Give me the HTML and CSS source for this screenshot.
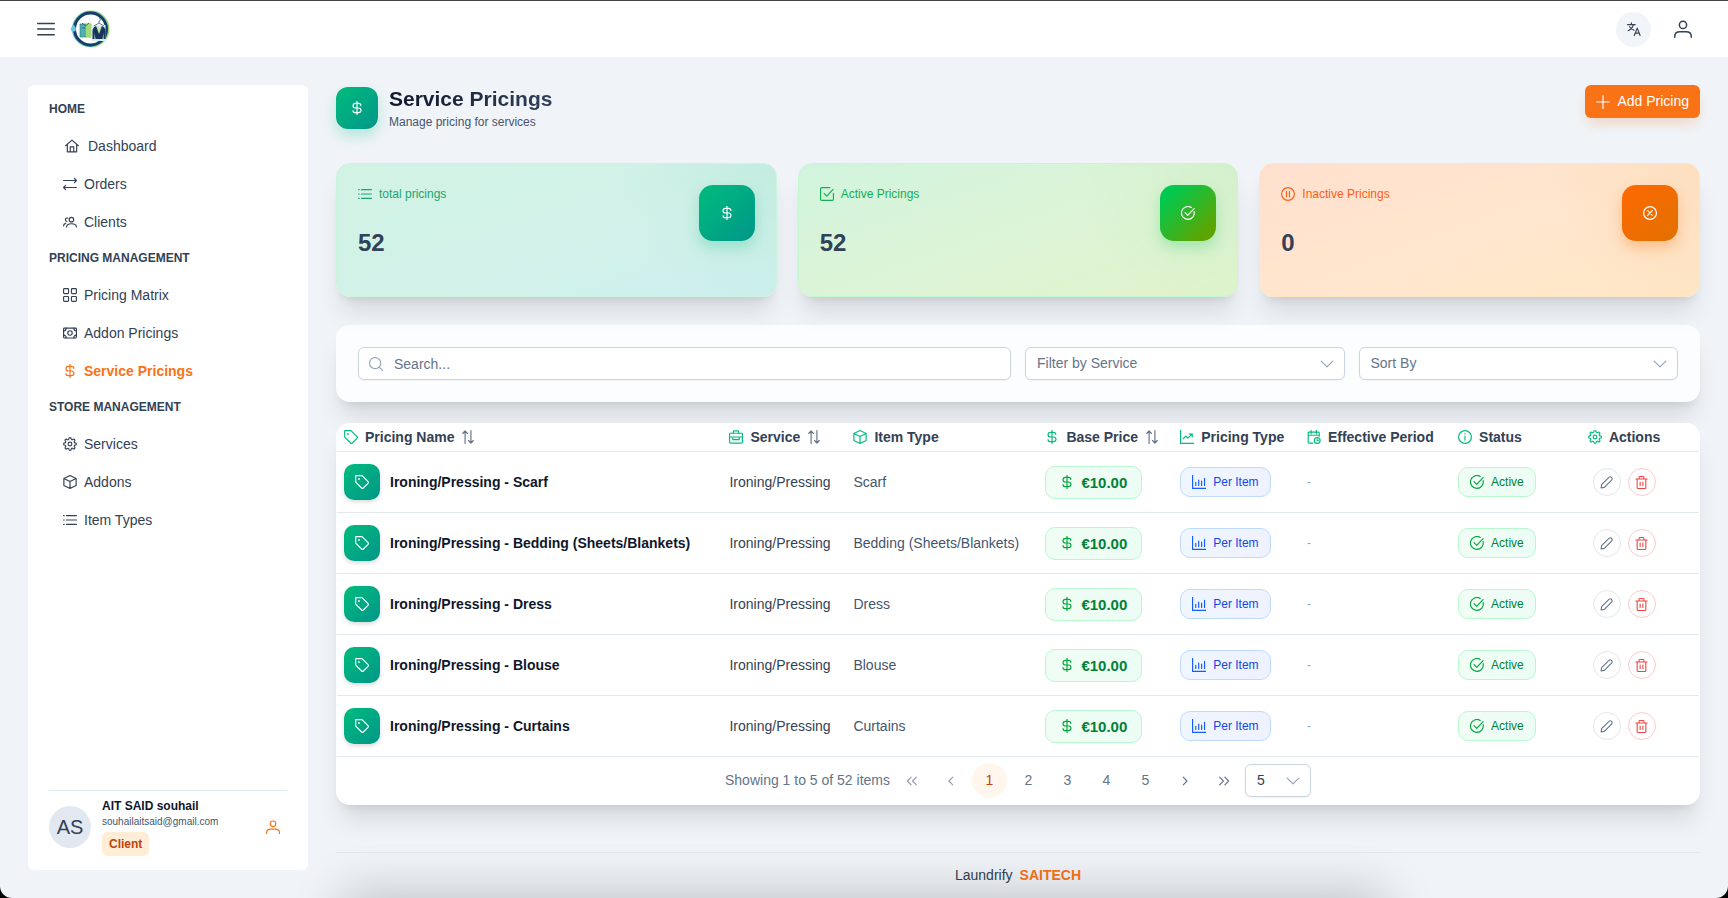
FILE: index.html
```html
<!DOCTYPE html>
<html lang="en">
<head>
    <meta charset="UTF-8">
    <meta name="viewport" content="width=device-width, initial-scale=1.0">
    <title>Laundrify - Service Pricings</title>
    <link rel="stylesheet" href="styles.css">
</head>
<body>
    <svg class="sprite" aria-hidden="true">
        <symbol id="i-bars" viewBox="0 0 24 24"><path d="M1 4.500h22M1 12h22M1 19.500h22"/></symbol>
        <symbol id="i-home" viewBox="0 0 24 24"><path d="M1 11.500 12 2l11 9.500M4 9.500V22h16V9.500M9 22v-8.500h6V22"/></symbol>
        <symbol id="i-swap" viewBox="0 0 24 24"><path d="M1 6h22M19.500 2.500 23 6l-3.500 3.500M23 18H1M4.500 14.500 1 18l3.500 3.500"/></symbol>
        <symbol id="i-users" viewBox="0 0 24 24"><circle cx="14.500" cy="8" r="3.800"/><path d="M6 20.500c0-3.500 3-5.500 8.500-5.500s8.500 2 8.500 5.500M8.500 5.500C6 4.500 4 6 4.200 8.200c.1 1.500 1 2.500 2.500 2.900M1 18.500c0-2 1.200-3.600 3.600-4.200"/></symbol>
        <symbol id="i-grid" viewBox="0 0 24 24"><rect x="1" y="1" width="8.500" height="8.500" rx="1.500"/><rect x="14.500" y="1" width="8.500" height="8.500" rx="1.500"/><rect x="1" y="14.500" width="8.500" height="8.500" rx="1.500"/><rect x="14.500" y="14.500" width="8.500" height="8.500" rx="1.500"/></symbol>
        <symbol id="i-bill" viewBox="0 0 24 24"><rect x="1" y="3.500" width="22" height="17" rx="1.500"/><circle cx="12" cy="12" r="3.800"/><path d="M1 8.500c3 0 4.500-1.500 4.500-5M23 8.500c-3 0-4.500-1.500-4.500-5M1 15.500c3 0 4.500 1.500 4.500 5M23 15.500c-3 0-4.500 1.500-4.500 5"/></symbol>
        <symbol id="i-dollar" viewBox="0 0 24 24"><path d="M12 .5v23M18.500 7.500c0-2.200-1.800-3.500-4-3.500H9.500C7 4 5.200 5.600 5.200 8s1.800 4 4.300 4h5c2.500 0 4.300 1.600 4.300 4s-1.800 4-4.300 4h-5c-2.500 0-4.300-1.300-4.300-3.500"/></symbol>
        <symbol id="i-cog" viewBox="0 0 24 24"><circle cx="12" cy="12" r="3.200"/><path d="M19.400 15a1.650 1.650 0 0 0 .33 1.820l.06.06a2 2 0 0 1 0 2.830 2 2 0 0 1-2.830 0l-.06-.06a1.650 1.650 0 0 0-1.820-.33 1.650 1.650 0 0 0-1 1.510V21a2 2 0 0 1-2 2 2 2 0 0 1-2-2v-.09A1.650 1.650 0 0 0 9 19.400a1.650 1.650 0 0 0-1.820.33l-.06.06a2 2 0 0 1-2.830 0 2 2 0 0 1 0-2.830l.06-.06a1.650 1.650 0 0 0 .33-1.820 1.650 1.650 0 0 0-1.510-1H3a2 2 0 0 1-2-2 2 2 0 0 1 2-2h.09A1.650 1.650 0 0 0 4.600 9a1.650 1.650 0 0 0-.33-1.820l-.06-.06a2 2 0 0 1 0-2.830 2 2 0 0 1 2.830 0l.06.06a1.650 1.650 0 0 0 1.820.33H9a1.650 1.650 0 0 0 1-1.510V3a2 2 0 0 1 2-2 2 2 0 0 1 2 2v.09a1.650 1.650 0 0 0 1 1.510 1.650 1.650 0 0 0 1.820-.33l.06-.06a2 2 0 0 1 2.830 0 2 2 0 0 1 0 2.830l-.06.06a1.650 1.650 0 0 0-.33 1.820V9a1.650 1.650 0 0 0 1.510 1H21a2 2 0 0 1 2 2 2 2 0 0 1-2 2h-.09a1.650 1.650 0 0 0-1.510 1z"/></symbol>
        <symbol id="i-box" viewBox="0 0 24 24"><path d="M12 1 22.500 6v12L12 23 1.500 18V6zM1.500 6 12 11l10.500-5M12 11v12"/></symbol>
        <symbol id="i-list" viewBox="0 0 24 24"><path d="M6 4.500h17M6 12h17M6 19.500h17M1 4.500h1M1 12h1M1 19.500h1"/></symbol>
        <symbol id="i-user" viewBox="0 0 24 24"><circle cx="12" cy="6.500" r="4.800"/><path d="M1 23v-1.500c0-4 3-6 7-6h8c4 0 7 2 7 6V23"/></symbol>
        <symbol id="i-language" viewBox="0 0 24 24"><path d="M1 4.500h13M7.500 1.500v3M11 4.500C10 9 7 12.500 2 15M4.500 8c1.500 3 4 5 7.500 6M12.500 23l5-12.500 5 12.500M14.200 19h6.600"/></symbol>
        <symbol id="i-plus" viewBox="0 0 24 24"><path d="M12 1v22M1 12h22"/></symbol>
        <symbol id="i-check-square" viewBox="0 0 24 24"><path d="M17 1H3a2 2 0 0 0-2 2v18a2 2 0 0 0 2 2h18a2 2 0 0 0 2-2V11M7 11l4.500 4.500L22.500 4"/></symbol>
        <symbol id="i-check-circle" viewBox="0 0 24 24"><path d="M22.500 9.500A11 11 0 1 1 17.500 2.500M7 11.500l4.500 4.500L22.500 4.500"/></symbol>
        <symbol id="i-pause" viewBox="0 0 24 24"><circle cx="12" cy="12" r="11"/><path d="M9.500 7.500v9M14.500 7.500v9"/></symbol>
        <symbol id="i-times-circle" viewBox="0 0 24 24"><circle cx="12" cy="12" r="11"/><path d="m8 8 8 8M16 8l-8 8"/></symbol>
        <symbol id="i-search" viewBox="0 0 24 24"><circle cx="10.500" cy="10.500" r="9.500"/><path d="m17.500 17.500 6 6"/></symbol>
        <symbol id="i-chevron" viewBox="0 0 24 24"><path d="m2 7 10 10L22 7"/></symbol>
        <symbol id="i-tag" viewBox="0 0 24 24"><path d="M1.200 1.200h10.900L22.300 11.400a2 2 0 0 1 0 2.800l-8.100 8.100a2 2 0 0 1-2.800 0L1.200 12.100z"/><circle cx="6.800" cy="6.800" r=".6"/></symbol>
        <symbol id="i-briefcase" viewBox="0 0 24 24"><rect x="1" y="5.500" width="22" height="17" rx="1.500"/><path d="M7.500 5.500V3A1.500 1.500 0 0 1 9 1.500h6A1.500 1.500 0 0 1 16.500 3v2.500M1 12h22M6.500 12v4.500h11V12"/></symbol>
        <symbol id="i-sort" viewBox="0 0 24 24"><path d="M7 23V2M3 6l4-4.500L11 6M17 1v21M13 18l4 4.500L21 18"/></symbol>
        <symbol id="i-chart-line" viewBox="0 0 24 24"><path d="M1 .5V23h23M5.500 15l4.500-4.500 3.500 3.500L21 7M16 7h5v5"/></symbol>
        <symbol id="i-chart-bar" viewBox="0 0 24 24"><path d="M1 .5V23h23M6.500 12.500V18M11.500 8.500V18M16.500 10.500V18M21.500 5.500V18"/></symbol>
        <symbol id="i-calendar" viewBox="0 0 24 24"><path d="M10 22.500H3.500A1.500 1.500 0 0 1 2 21V5a1.500 1.500 0 0 1 1.500-1.500h16A1.500 1.500 0 0 1 21 5v5.500M2 9h19M7 .5v6M16 .5v6"/><circle cx="17.500" cy="18" r="5"/><path d="M17.500 15.500V18h2"/></symbol>
        <symbol id="i-info" viewBox="0 0 24 24"><circle cx="12" cy="12" r="11"/><path d="M12 10.500v7M12 6v.8"/></symbol>
        <symbol id="i-pencil" viewBox="0 0 24 24"><path d="M2 22l1-6L17 2.200a2.500 2.500 0 0 1 3.600 0l1.200 1.200a2.500 2.500 0 0 1 0 3.600L8 21z"/></symbol>
        <symbol id="i-trash" viewBox="0 0 24 24"><path d="M1.500 5.500h21M4 5.500V21A2 2 0 0 0 6 23h12a2 2 0 0 0 2-2V5.500M7.500 5.500V2.500A1.500 1.500 0 0 1 9 1h6a1.500 1.500 0 0 1 1.500 1.500v3M9.500 11v6.500M14.500 11v6.500"/></symbol>
        <symbol id="i-left" viewBox="0 0 24 24"><path d="M15 5.500 8.500 12l6.500 6.500"/></symbol>
        <symbol id="i-right" viewBox="0 0 24 24"><path d="m9 5.500 6.500 6.500L9 18.500"/></symbol>
        <symbol id="i-first" viewBox="0 0 24 24"><path d="M10.500 5.500 4 12l6.500 6.500M19.500 5.500 13 12l6.500 6.500"/></symbol>
        <symbol id="i-last" viewBox="0 0 24 24"><path d="m4.500 5.500 6.500 6.500-6.500 6.500M13.500 5.500 20 12l-6.500 6.500"/></symbol>
    </svg>

    <header class="topbar">
        <button class="icon-button" type="button" aria-label="Toggle menu"><svg class="icon icon-lg"><use href="#i-bars"/></svg></button>
        <a class="logo" href="#" aria-label="Laundrify">
            <svg viewBox="0 0 40 40" width="40" height="40">
                <circle cx="21" cy="20" r="17.500" fill="none" stroke="#9bd977" stroke-width="2"/>
                <circle cx="20" cy="20" r="17.500" fill="none" stroke="#4fb3c4" stroke-width="1"/>
                <circle cx="20.500" cy="20" r="16" fill="#fff" stroke="#153f6b" stroke-width="3"/>
                <path d="M3.500 15.500c2 2.500 2.500 3.500 2.500 4.500a2.600 2.600 0 0 1-5.200 0c0-1 .8-2.500 2.700-4.500z" fill="#6cc5df"/>
                <path d="M10 15h11v13H10z" fill="#4fb0b4" stroke="#2a6f80" stroke-width=".6"/>
                <path d="M16 15h5v13h-5z" fill="#a5d977"/>
                <path d="m12 14 3.500 3 3.500-3M12 19h3" fill="none" stroke="#2a6f80" stroke-width="1"/>
                <path d="M21.500 16h14v16h-14z" fill="#d5f0f5"/>
                <path d="M22.500 30v-8c0-3 2-4 3.500-5l3 3 3-3c1.500 1 3.500 2 3.500 5v8h-2v-6l-1 6h-7l-1-6v6z" fill="#18335c"/>
                <path d="m26 17 3 8 3-8-3 2z" fill="#c3e8a0"/>
                <path d="m24 17 5-3 5 3M29 14v-2c2 0 2-2.500 0-2.500" fill="none" stroke="#47728c" stroke-width=".9"/>
            </svg>
        </a>
        <div class="topbar-actions">
            <button class="icon-button language" type="button" aria-label="Language"><svg class="icon"><use href="#i-language"/></svg></button>
            <button class="icon-button" type="button" aria-label="Profile"><svg class="icon icon-lg"><use href="#i-user"/></svg></button>
        </div>
    </header>

    <div class="layout">
        <aside class="sidebar">
            <nav>
                <h2 class="menu-title">Home</h2>
                <ul class="menu">
                    <li><a class="menu-link home-link" href="#"><svg class="icon"><use href="#i-home"/></svg>Dashboard</a></li>
                    <li><a class="menu-link" href="#"><svg class="icon"><use href="#i-swap"/></svg>Orders</a></li>
                    <li><a class="menu-link" href="#"><svg class="icon"><use href="#i-users"/></svg>Clients</a></li>
                </ul>
                <h2 class="menu-title">Pricing Management</h2>
                <ul class="menu">
                    <li><a class="menu-link" href="#"><svg class="icon"><use href="#i-grid"/></svg>Pricing Matrix</a></li>
                    <li><a class="menu-link" href="#"><svg class="icon"><use href="#i-bill"/></svg>Addon Pricings</a></li>
                    <li><a class="menu-link active" href="#"><svg class="icon"><use href="#i-dollar"/></svg>Service Pricings</a></li>
                </ul>
                <h2 class="menu-title">Store Management</h2>
                <ul class="menu">
                    <li><a class="menu-link" href="#"><svg class="icon"><use href="#i-cog"/></svg>Services</a></li>
                    <li><a class="menu-link" href="#"><svg class="icon"><use href="#i-box"/></svg>Addons</a></li>
                    <li><a class="menu-link" href="#"><svg class="icon"><use href="#i-list"/></svg>Item Types</a></li>
                </ul>
            </nav>
            <div class="account">
                <div class="avatar">AS</div>
                <div class="account-info">
                    <div class="account-name">AIT SAID souhail</div>
                    <div class="account-email">souhailaitsaid@gmail.com</div>
                    <span class="role">Client</span>
                </div>
                <button class="icon-button account-button" type="button" aria-label="My account"><svg class="icon"><use href="#i-user"/></svg></button>
            </div>
        </aside>

        <div class="page">
            <main>
                <div class="page-header">
                    <div class="page-icon emerald"><svg class="icon"><use href="#i-dollar"/></svg></div>
                    <div>
                        <h1>Service Pricings</h1>
                        <p class="subtitle">Manage pricing for services</p>
                    </div>
                    <button class="add-button" type="button"><svg class="icon"><use href="#i-plus"/></svg>Add Pricing</button>
                </div>

                <section class="stats">
                    <div class="stat stat-total">
                        <div>
                            <div class="stat-label"><svg class="icon"><use href="#i-list"/></svg>total pricings</div>
                            <div class="stat-value">52</div>
                        </div>
                        <div class="stat-icon emerald"><svg class="icon"><use href="#i-dollar"/></svg></div>
                    </div>
                    <div class="stat stat-active">
                        <div>
                            <div class="stat-label"><svg class="icon"><use href="#i-check-square"/></svg>Active Pricings</div>
                            <div class="stat-value">52</div>
                        </div>
                        <div class="stat-icon green"><svg class="icon"><use href="#i-check-circle"/></svg></div>
                    </div>
                    <div class="stat stat-inactive">
                        <div>
                            <div class="stat-label"><svg class="icon"><use href="#i-pause"/></svg>Inactive Pricings</div>
                            <div class="stat-value">0</div>
                        </div>
                        <div class="stat-icon orange"><svg class="icon"><use href="#i-times-circle"/></svg></div>
                    </div>
                </section>

                <form class="filters">
                    <div class="field search">
                        <svg class="icon"><use href="#i-search"/></svg>
                        <input type="text" placeholder="Search..." aria-label="Search">
                    </div>
                    <div class="field">
                        <select aria-label="Filter by Service"><option>Filter by Service</option></select>
                        <svg class="icon"><use href="#i-chevron"/></svg>
                    </div>
                    <div class="field">
                        <select aria-label="Sort By"><option>Sort By</option></select>
                        <svg class="icon"><use href="#i-chevron"/></svg>
                    </div>
                </form>

                <section class="table-card">
                    <table>
                        <thead>
                            <tr>
                                <th class="col-name"><div class="head"><svg class="icon"><use href="#i-tag"/></svg>Pricing Name<svg class="icon sort"><use href="#i-sort"/></svg></div></th>
                                <th class="col-service"><div class="head"><svg class="icon"><use href="#i-briefcase"/></svg>Service<svg class="icon sort"><use href="#i-sort"/></svg></div></th>
                                <th class="col-item"><div class="head"><svg class="icon"><use href="#i-box"/></svg>Item Type</div></th>
                                <th class="col-price"><div class="head"><svg class="icon"><use href="#i-dollar"/></svg>Base Price<svg class="icon sort"><use href="#i-sort"/></svg></div></th>
                                <th class="col-type"><div class="head"><svg class="icon"><use href="#i-chart-line"/></svg>Pricing Type</div></th>
                                <th class="col-period"><div class="head"><svg class="icon"><use href="#i-calendar"/></svg>Effective Period</div></th>
                                <th class="col-status"><div class="head"><svg class="icon"><use href="#i-info"/></svg>Status</div></th>
                                <th class="col-actions"><div class="head"><svg class="icon"><use href="#i-cog"/></svg>Actions</div></th>
                            </tr>
                        </thead>
                        <tbody id="rows"></tbody>
                    </table>
                    <div class="paginator">
                        <span class="showing">Showing 1 to 5 of 52 items</span>
                        <button type="button" aria-label="First page" disabled><svg class="icon"><use href="#i-first"/></svg></button>
                        <button type="button" aria-label="Previous page" disabled><svg class="icon"><use href="#i-left"/></svg></button>
                        <button type="button" class="current">1</button>
                        <button type="button">2</button>
                        <button type="button">3</button>
                        <button type="button">4</button>
                        <button type="button">5</button>
                        <button type="button" aria-label="Next page"><svg class="icon"><use href="#i-right"/></svg></button>
                        <button type="button" aria-label="Last page"><svg class="icon"><use href="#i-last"/></svg></button>
                        <div class="field per-page">
                            <select aria-label="Rows per page"><option>5</option></select>
                            <svg class="icon"><use href="#i-chevron"/></svg>
                        </div>
                    </div>
                </section>
            </main>
            <footer class="footer">Laundrify <a href="#">SAITECH</a></footer>
        </div>
    </div>

    <script>
    const items = ['Scarf', 'Bedding (Sheets/Blankets)', 'Dress', 'Blouse', 'Curtains'];
    const icon = name => `<svg class="icon"><use href="#i-${name}"/></svg>`;

    document.getElementById('rows').innerHTML = items.map(item => `
        <tr>
            <td><div class="name"><span class="name-icon emerald">${icon('tag')}</span>Ironing/Pressing - ${item}</div></td>
            <td>Ironing/Pressing</td>
            <td class="item">${item}</td>
            <td><span class="pill price">${icon('dollar')}€10.00</span></td>
            <td><span class="pill type">${icon('chart-bar')}Per Item</span></td>
            <td class="period">-</td>
            <td><span class="pill status">${icon('check-circle')}Active</span></td>
            <td>
                <div class="row-actions">
                    <button type="button" aria-label="Edit">${icon('pencil')}</button>
                    <button type="button" class="delete" aria-label="Delete">${icon('trash')}</button>
                </div>
            </td>
        </tr>`).join('');
    </script>
</body>
</html>
```
FILE: styles.css
```css
* {
    box-sizing: border-box;
}

html {
    background: #000;
}

body {
    margin: 0;
    min-height: 100vh;
    display: flex;
    flex-direction: column;
    position: relative;
    overflow-x: hidden;
    font-family: "Liberation Sans", Arial, sans-serif;
    font-size: 14px;
    line-height: 17px;
    color: #334155;
    background: #f0f4f9;
    border-radius: 0 0 12px 12px;
}

/* soft shade along the bottom edge of the window */
body::after {
    content: "";
    position: fixed;
    top: 100%;
    left: 20%;
    right: 20%;
    height: 40px;
    box-shadow: 0 0 50px 4px rgba(0, 0, 0, 0.22);
    pointer-events: none;
}

a {
    color: inherit;
    text-decoration: none;
}

button,
input,
select {
    font: inherit;
    color: inherit;
}

button {
    cursor: pointer;
}

.sprite {
    position: absolute;
    width: 0;
    height: 0;
}

.icon {
    width: 14px;
    height: 14px;
    flex: none;
    fill: none;
    stroke: currentColor;
    stroke-width: 2;
    stroke-linecap: round;
    stroke-linejoin: round;
}

.icon-lg {
    width: 18px;
    height: 18px;
}

/* topbar */
.topbar {
    display: flex;
    align-items: center;
    height: 57px;
    padding: 0 28px;
    background: #fff;
    border-top: 1px solid #434343;
}

.icon-button {
    display: flex;
    align-items: center;
    justify-content: center;
    width: 35px;
    height: 35px;
    padding: 0;
    border: none;
    border-radius: 50%;
    background: none;
}

.logo {
    display: flex;
    margin-left: 7px;
}

.topbar-actions {
    display: flex;
    gap: 14px;
    margin-left: auto;
}

.language {
    background: #f1f5f9;
}

/* sidebar */
.layout {
    flex: 1;
    display: flex;
    gap: 28px;
    padding: 28px 28px 0;
}

.sidebar {
    flex: none;
    display: flex;
    flex-direction: column;
    justify-content: space-between;
    width: 280px;
    margin-bottom: 28px;
    padding: 7px 21px 14px;
    background: #fff;
    border-radius: 6px;
}

.menu-title {
    margin: 10px 0;
    font-size: 12px;
    line-height: 15px;
    text-transform: uppercase;
}

.menu {
    list-style: none;
    margin: 0;
    padding: 0;
}

.menu-link {
    display: flex;
    align-items: center;
    gap: 7px;
    height: 38px;
    padding: 0 14px;
}

.home-link {
    gap: 9px;
    padding-left: 16px;
}

.menu-link.active {
    font-weight: bold;
    color: #f97316;
}

.account {
    display: flex;
    align-items: center;
    gap: 11px;
    padding-top: 7px;
    border-top: 1px solid #e2e8f0;
}

.avatar {
    display: flex;
    align-items: center;
    justify-content: center;
    width: 42px;
    height: 42px;
    border-radius: 50%;
    background: #e2e8f0;
    font-size: 20px;
}

.account-name {
    font-size: 12px;
    font-weight: bold;
    color: #0f172b;
}

.account-email {
    font-size: 10px;
    line-height: 14px;
    color: #45556c;
}

.role {
    display: inline-block;
    margin-top: 3px;
    padding: 4px 7px;
    border-radius: 6px;
    background: #ffedd5;
    font-size: 12px;
    line-height: 16px;
    font-weight: bold;
    color: #c2410c;
}

.account-button {
    width: 28px;
    height: 28px;
    margin-left: auto;
    color: #f97316;
}

/* page header */
.page {
    flex: 1;
    min-width: 0;
    display: flex;
    flex-direction: column;
    justify-content: space-between;
}

.page-header {
    display: flex;
    align-items: flex-start;
    gap: 11px;
    margin-bottom: 32px;
}

.emerald {
    background: linear-gradient(135deg, #00bc7d, #009689);
    color: #fff;
}

.green {
    background: linear-gradient(135deg, #00c950 15%, #5ea500 85%);
    box-shadow: 0 7px 14px rgba(0, 201, 80, 0.25);
}

.orange {
    background: linear-gradient(135deg, #ff6900, #e17100);
    box-shadow: 0 7px 14px rgba(255, 105, 0, 0.3);
}

.page-icon,
.stat-icon,
.name-icon {
    flex: none;
    display: flex;
    align-items: center;
    justify-content: center;
    color: #fff;
}

.page-icon {
    width: 42px;
    height: 42px;
    margin-top: 2px;
    border-radius: 12px;
    box-shadow: 0 7px 14px rgba(0, 188, 125, 0.25);
}

h1 {
    margin: 0;
    font-size: 21px;
    line-height: 28px;
    background: linear-gradient(90deg, #0f172b, #314158);
    background-clip: text;
    -webkit-background-clip: text;
    color: transparent;
}

.subtitle {
    margin: 0;
    font-size: 12px;
    line-height: 18px;
    color: #45556c;
}

.add-button {
    display: flex;
    align-items: center;
    gap: 7px;
    height: 33px;
    margin-left: auto;
    padding: 0 11px;
    border: none;
    border-radius: 6px;
    background: #f97316;
    color: #fff;
    box-shadow: 0 8px 14px -3px rgba(249, 115, 22, 0.25);
}

/* stats */
.stats {
    display: grid;
    grid-template-columns: repeat(3, 1fr);
    gap: 21px;
    margin-bottom: 28px;
}

.stat,
.filters,
.table-card {
    border-radius: 14px;
    box-shadow: 0 20px 25px -5px rgba(0, 0, 0, 0.1), 0 8px 10px -6px rgba(0, 0, 0, 0.1);
}

.stat {
    display: flex;
    justify-content: space-between;
    align-items: flex-start;
    padding: 21px 21px 39px;
    border: 1px solid;
}

.stat-total {
    background: radial-gradient(circle at 100% 0, #c3ece0, transparent 160px), linear-gradient(160deg, #d1f3e3, #d2f1ea 60%, #cdefef);
    border-color: #caf5dc;
    color: #19a673;
}

.stat-active {
    background: radial-gradient(circle at 100% 0, #d3f0cb, transparent 160px), linear-gradient(160deg, #d1f4de, #ddf4d6 55%, #e0f4ca);
    border-color: #c6f7d5;
    color: #17ae4e;
}

.stat-inactive {
    background: radial-gradient(circle at 100% 0, #fddfbf, transparent 160px), linear-gradient(160deg, #ffe0cf, #ffe6ce 55%, #fee7c5);
    border-color: #fee5c6;
    color: #fb5f17;
}

.stat-label {
    display: flex;
    align-items: center;
    gap: 7px;
    font-size: 12px;
    line-height: 18px;
}

.stat-value {
    margin-top: 26px;
    font-size: 24px;
    line-height: 28px;
    font-weight: bold;
    color: #314158;
}

.stat-icon {
    width: 56px;
    height: 56px;
    border-radius: 14px;
}

.stat-icon.emerald {
    box-shadow: 0 7px 14px rgba(0, 188, 125, 0.25);
}

/* filters */
.filters {
    display: grid;
    grid-template-columns: repeat(4, 1fr);
    gap: 14px;
    margin-bottom: 21px;
    padding: 22px;
    background: #fcfdff;
}

.search {
    grid-column: span 2;
}

.field {
    position: relative;
}

.field input,
.field select {
    display: block;
    width: 100%;
    height: 33px;
    padding: 0 11px;
    border: 1px solid #cbd5e1;
    border-radius: 6px;
    background: #fff;
    color: #64748b;
    appearance: none;
    box-shadow: 0 1px 2px rgba(18, 18, 23, 0.05);
}

.field input {
    padding-left: 35px;
}

.field input::placeholder {
    color: #64748b;
}

.field .icon {
    position: absolute;
    top: 10px;
    right: 11px;
    color: #94a3b8;
    pointer-events: none;
}

.search .icon {
    left: 11px;
    right: auto;
}

/* table */
.table-card {
    overflow: hidden;
    background: #fff;
    border: 1px solid #fff;
    border-top: none;
}

table {
    width: 100%;
    border-collapse: collapse;
    table-layout: fixed;
}

th,
td {
    padding: 0 7px;
    border-bottom: 1px solid #e2e8f0;
    text-align: left;
    white-space: nowrap;
}

td {
    padding: 12px 7px;
}

.col-name { width: 28.3%; }
.col-service { width: 9.1%; }
.col-item { width: 14.1%; }
.col-price { width: 9.9%; }
.col-type { width: 9.3%; }
.col-period { width: 11.1%; }
.col-status { width: 7.2%; }
.col-actions { width: 11%; }

.head {
    display: flex;
    align-items: center;
    gap: 7px;
    height: 28px;
}

.head .icon {
    color: #00bc7d;
}

.head .sort {
    color: #64748b;
}

.col-actions .head {
    justify-content: center;
}

.name {
    display: flex;
    align-items: center;
    gap: 10px;
    font-weight: bold;
    color: #0f172b;
}

.name-icon {
    width: 36px;
    height: 36px;
    border-radius: 10px;
    box-shadow: 0 2px 4px rgba(0, 0, 0, 0.15);
}

.item {
    color: #45556c;
}

.period {
    font-size: 12px;
    color: #90a1b9;
}

.pill {
    display: inline-flex;
    align-items: center;
    gap: 7px;
    height: 30px;
    padding: 0 11px;
    border: 1px solid;
    border-radius: 10px;
    font-size: 12px;
    vertical-align: middle;
}

.price {
    height: 33px;
    padding: 0 14px;
    border-color: #b9f8cf;
    background: linear-gradient(90deg, #f0fdf4, #ecfdf5);
    font-size: 15px;
    font-weight: bold;
    color: #008236;
}

.price .icon,
.status .icon {
    color: #00a63e;
}

.type {
    border-color: #bedbff;
    background: linear-gradient(90deg, #eff6ff, #eef2ff);
    color: #1447e6;
}

.type .icon {
    color: #155dfc;
}

.status {
    border-color: #b9f8cf;
    background: linear-gradient(90deg, #f0fdf4, #ecfdf5);
    color: #008236;
}

.row-actions {
    display: flex;
    justify-content: center;
    gap: 7px;
}

.row-actions button {
    display: flex;
    align-items: center;
    justify-content: center;
    width: 28px;
    height: 28px;
    padding: 0;
    border: 1px solid #e2e8f0;
    border-radius: 50%;
    background: none;
    color: #64748b;
}

.row-actions .icon {
    width: 13px;
    height: 13px;
}

.row-actions .delete {
    border-color: #fecaca;
    color: #ef4444;
}

/* paginator */
.paginator {
    display: flex;
    align-items: center;
    justify-content: center;
    gap: 4px;
    padding: 6px 14px;
    color: #64748b;
}

.paginator button {
    display: flex;
    align-items: center;
    justify-content: center;
    width: 35px;
    height: 35px;
    padding: 0;
    border: none;
    border-radius: 50%;
    background: none;
}

.paginator button:disabled {
    opacity: 0.7;
}

.paginator .current {
    background: #fff7ed;
    color: #c2410c;
}

.per-page {
    width: 66px;
}

.per-page select {
    color: #334155;
}

.footer {
    display: flex;
    justify-content: center;
    gap: 7px;
    padding: 14px;
    border-top: 1px solid #e2e8f0;
}

.footer a {
    font-weight: bold;
    color: #f97316;
}
```
